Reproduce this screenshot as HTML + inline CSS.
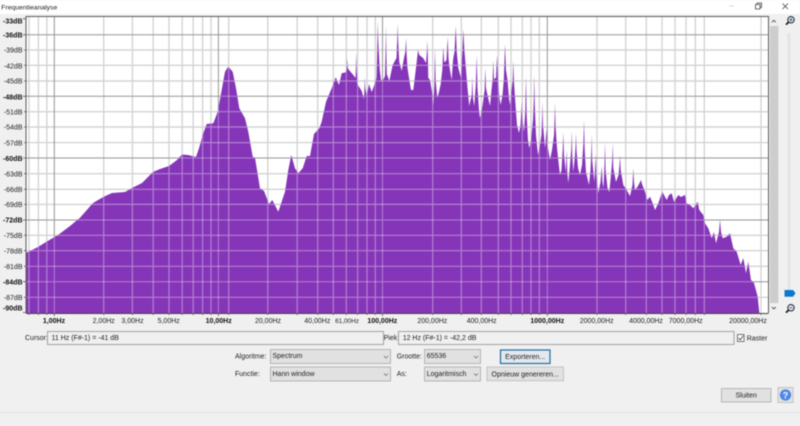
<!DOCTYPE html>
<html>
<head>
<meta charset="utf-8">
<title>Frequentieanalyse</title>
<style>
html,body{margin:0;padding:0;width:800px;height:426px;overflow:hidden;background:#f0f0f0}
svg{display:block;filter:blur(.4px)}
text{font-family:"Liberation Sans",sans-serif;font-size:7px;fill:#222}
.b{font-weight:bold;fill:#111}
.d text{text-anchor:end}
.x text{text-anchor:middle}
.c{text-anchor:middle}
</style>
</head>
<body>
<svg width="800" height="426" viewBox="0 0 800 426" xmlns="http://www.w3.org/2000/svg">
<defs>
<path id="minor" d="M29 17V313M38.4 17V313M46.8 17V313M103.7 17V313M132.4 17V313M153.2 17V313M169 17V313M182.2 17V313M193.2 17V313M202.6 17V313M211 17V313M228.7 17V313M267.8 17V313M297.2 17V313M317.7 17V313M333.3 17V313M346.3 17V313M357.6 17V313M367 17V313M375.3 17V313M432.7 17V313M461.3 17V313M481.3 17V313M498.3 17V313M511 17V313M522.3 17V313M531 17V313M539.3 17V313M597 17V313M625.7 17V313M646.3 17V313M662 17V313M675 17V313M686 17V313M695.3 17V313M704.3 17V313M761 17V313M26 50H768.5M26 65.3H768.5M26 81H768.5M26 111.7H768.5M26 127H768.5M26 142.6H768.5M26 173.7H768.5M26 189.3H768.5M26 204.4H768.5M26 235.3H768.5M26 250.7H768.5M26 266.3H768.5M26 297.3H768.5"/>
<path id="major" d="M54.3 17V313M218.4 17V313M382.5 17V313M547.3 17V313M26 34.7H768.5M26 96.3H768.5M26 158H768.5M26 220H768.5M26 281.7H768.5"/>
<clipPath id="sp"><polygon points="26,313 26,253 38,247 46,242 58,235 70,226 80,217.7 93,203 103.7,196.7 112,193 125,192 132,188 142,183 153,172 160,169 169,166 177,160 182,154.5 188,155 196,157 199.3,147.3 202.7,135 206.7,124 213.3,123.3 217.7,111.7 221.7,90 225,71.7 228.3,66.7 232.7,71.7 236,88.3 239.3,108.3 245,118.3 248.3,131.7 252.7,156.7 255,157.7 260,188.3 264,191 269,204 272.3,200 278.3,211.7 285,191.7 288.3,170 291.3,155 295,168.3 298.3,173.3 302.7,168.3 306.7,156 310,156 314,134 319.3,128.3 321.7,121.7 326,101.7 331.7,88.3 335.7,77.3 339,85 341.7,73.3 346,72.3 346.9,68 347.3,58.3 347.8,68 349,70 353.3,75 355.5,78 356,65 356.3,52.3 356.7,70 357.3,84 361.7,91 364,99 364.5,85 364.7,77 365.2,88 366.7,96 369,84 371.7,92 374.3,85 376.5,78 377.2,50 377.7,21 378.2,40 379,55 379.8,70 381,80 382.7,81 385,76 385.6,50 386,25 386.4,55 386.8,74 389.3,81 392.7,65 396.5,58 397.2,40 397.7,24 398.2,42 399.3,62 401.7,71 404,58 405.3,52 406,38 406.7,55 407.5,68 409,78 411,90 413.3,90 415.5,72 416.7,62 418,50 419.3,55 423.3,58.3 426,63 427,50 427.3,40 427.8,55 428.3,78 430,80 432,92 433.3,106 434.3,85 435,48 435.6,80 437.3,98 439,92 440.7,84 442.3,70 443.3,47 444.2,62 445,62 446.5,60 447.7,37 448.5,58 449.3,66 451.7,80 452.6,66 453.3,58 454.5,52 455.7,26 456.8,52 458.3,68 461,78 462.2,55 463.3,29 464.4,50 466,70 467.5,88 469.3,106 470.5,100 471.7,96 472.3,77 473,98 474.3,106 475.8,85 476.7,55 477.5,88 479,110 480,118 481.5,112 483.3,100 484.6,90 485.3,68 486,88 487.3,94 490,106 491.5,90 492.6,80 493.3,60 494,80 495,78 496,78 497,55 498,80 499.5,98 500.7,105 502.5,95 503.8,80 505,44 506,70 507.5,80 509,98 510,105 511.5,90 512.7,80 513.3,61 514,82 515.5,105 517,125 519,133 520.5,125 521.3,110 521.7,101 522.2,115 524,132 525.3,110 526,76 526.7,115 528,140 529.3,148 531,140 533,120 533.8,100 534.3,75 534.8,105 536,135 538,155 539,150 540,145 541.5,135 542.2,115 542.5,101 543,125 545,148 546.7,128 547.5,145 550,160 552,150 554,135 554.6,118 555,103 555.5,125 557,148 558.3,160 560,175 561.5,170 562.7,150 563.3,132 564,155 565.7,172 566.7,150 567.3,172 568.3,183 570,165 571.2,150 571.7,131 572.3,155 573.3,172 575,155 575.6,145 576,133 576.5,150 578,168 580,175 582,165 583.3,145 584,120 584.7,150 586,172 589,185 590.5,170 591.3,152 591.7,134 592.2,160 594.3,182 595.2,165 595.7,154 596.3,175 598.3,193 600.5,182 601.7,166 602.5,182 603.5,188 604.5,165 605,141.7 605.6,170 607.5,188 609.3,192 611,175 612.2,160 612.7,143 613.3,168 616,182 618.5,175 619.5,165 620,155 620.7,170 623.3,185 626.7,190 630,196 632.5,185 633.3,168 634,182 635,190 638,186 641,180 642,184 645,191.7 647.3,200 650,196.7 653,204 655,210 658.3,203.3 662.3,191.7 664,195 666.7,200 669,195 671.7,193.3 674,201.7 678.3,195 681,197 685,195 686.7,203.3 690,205 693.3,208.3 697.7,201.7 699.3,210 703.3,215 705,223.3 708.3,228.3 711.7,238.3 714,232 716,243.3 719,232 720,219.3 721,232 722.7,238.3 726.7,236.7 730,233.3 733.3,248.3 736.7,251.7 740.7,265 743.3,258 746,273 748.3,261.7 751,280 754,283 757.7,296.7 759.3,312.5 759.3,313"/></clipPath>
</defs>

<!-- window chrome -->
<rect width="800" height="426" fill="#f0f0f0"/>
<rect width="800" height="14" fill="#fff"/>
<text x="1.3" y="9.3" style="font-size:6.8px">Frequentieanalyse</text>
<path d="M729 6H734" stroke="#d8d8d8" stroke-width="1"/>
<path d="M755.5 4.5h4.5v4.5h-4.5zM757 4.5v-1.5h4.5v4.5h-1.5" fill="none" stroke="#444" stroke-width=".8"/>
<path d="M782.5 3.5L788 9M788 3.5L782.5 9" fill="none" stroke="#444" stroke-width=".8"/>

<!-- plot -->
<rect x="26" y="17" width="742.5" height="296" fill="#fff"/>
<use href="#minor" fill="none" stroke="#d4d4d4" stroke-width="1.4"/>
<use href="#major" fill="none" stroke="#969696" stroke-width="1"/>
<rect x="26" y="17" width="742.5" height="296" fill="#8535b8" clip-path="url(#sp)"/>
<g clip-path="url(#sp)">
<use href="#minor" fill="none" stroke="#fff" stroke-opacity=".38" stroke-width="1.2"/>
<use href="#major" fill="none" stroke="#fff" stroke-opacity=".38" stroke-width="1"/>
</g>
<path d="M26 313V16.5H768.5V313" fill="none" stroke="#5a5a5a" stroke-width="1"/>
<path d="M26 313.5H768.5" stroke="#444" stroke-width="1"/>
<path d="M23 18.7H26M23 34.7H26M24 50H26M24 65.3H26M24 81H26M23 96.3H26M24 111.7H26M24 127H26M24 142.6H26M23 158H26M24 173.7H26M24 189.3H26M24 204.4H26M23 220H26M24 235.3H26M24 250.7H26M24 266.3H26M23 281.7H26M24 297.3H26M23 312.5H26" stroke="#555" stroke-width=".8"/>
<path d="M29 313V315M38.4 313V315M46.8 313V315M54.3 313V316M103.7 313V315M132.4 313V315M153.2 313V315M169 313V315M182.2 313V315M193.2 313V315M202.6 313V315M211 313V315M218.4 313V316M228.7 313V315M267.8 313V315M297.2 313V315M317.7 313V315M333.3 313V315M346.3 313V315M357.6 313V315M367 313V315M375.3 313V315M382.5 313V316M432.7 313V315M461.3 313V315M481.3 313V315M498.3 313V315M511 313V315M522.3 313V315M531 313V315M539.3 313V315M547.3 313V316M597 313V315M625.7 313V315M646.3 313V315M662 313V315M675 313V315M686 313V315M695.3 313V315M704.3 313V315M761 313V315" stroke="#555" stroke-width=".8"/>

<g class="d">
<text x="22.5" y="23.5" class="b">-33dB</text>
<text x="22.5" y="37.5" class="b">-36dB</text>
<text x="22.5" y="52.5">-39dB</text>
<text x="22.5" y="68.5">-42dB</text>
<text x="22.5" y="83.5">-45dB</text>
<text x="22.5" y="99.5" class="b">-48dB</text>
<text x="22.5" y="114.5">-51dB</text>
<text x="22.5" y="129.5">-54dB</text>
<text x="22.5" y="145.5">-57dB</text>
<text x="22.5" y="161" class="b">-60dB</text>
<text x="22.5" y="176.5">-63dB</text>
<text x="22.5" y="192">-66dB</text>
<text x="22.5" y="207">-69dB</text>
<text x="22.5" y="222.5" class="b">-72dB</text>
<text x="22.5" y="238">-75dB</text>
<text x="22.5" y="253.5">-78dB</text>
<text x="22.5" y="269">-81dB</text>
<text x="22.5" y="284.5" class="b">-84dB</text>
<text x="22.5" y="300">-87dB</text>
<text x="22.5" y="310.7" class="b">-90dB</text>
</g>
<g class="x">
<text x="54" y="323" class="b">1,00Hz</text>
<text x="103.7" y="323">2,00Hz</text>
<text x="132.5" y="323">3,00Hz</text>
<text x="168.7" y="323">5,00Hz</text>
<text x="218.7" y="323" class="b">10,00Hz</text>
<text x="268" y="323">20,00Hz</text>
<text x="317.3" y="323">40,00Hz</text>
<text x="347" y="323" style="font-size:6.4px">61,00Hz</text>
<text x="382.3" y="323" class="b">100,00Hz</text>
<text x="432.3" y="323">200,00Hz</text>
<text x="481.7" y="323">400,00Hz</text>
<text x="547.3" y="323" class="b">1000,00Hz</text>
<text x="596.7" y="323">2000,00Hz</text>
<text x="646" y="323">4000,00Hz</text>
<text x="685.7" y="323">7000,00Hz</text>
<text x="748" y="323">20000,00Hz</text>
</g>

<!-- scrollbar + slider -->
<rect x="770" y="26" width="8.3" height="277" fill="#cdcdcd"/>
<path d="M771.8 22.3L773.8 20.3L775.8 22.3M771.8 307L773.8 309L775.8 307" fill="none" stroke="#555" stroke-width=".9"/>
<rect x="787.5" y="33" width="3" height="257" fill="#e4e4e4"/>
<path d="M784.5 290H793L795.5 293.3L793 296.7H784.5Z" fill="#0a78d0"/>
<circle cx="791" cy="19.7" r="3.2" fill="#dfe7f5" stroke="#222" stroke-width="1"/>
<path d="M788.7 22L786 24.7" stroke="#111" stroke-width="1.6"/>
<path d="M789.4 19.7H792.6M791 18.1V21.3" stroke="#2a4f9a" stroke-width=".8"/>
<circle cx="791" cy="307.7" r="3.2" fill="#dfe7f5" stroke="#222" stroke-width="1"/>
<path d="M788.7 310L786 312.7" stroke="#111" stroke-width="1.6"/>
<path d="M789.4 307.7H792.6" stroke="#2a4f9a" stroke-width=".8"/>

<!-- cursor / peak row -->
<text x="25" y="339.8">Cursor:</text>
<rect x="47.5" y="331.5" width="336" height="13" fill="#f0f0f0" stroke="#a3a3a3"/>
<text x="51.5" y="339.8">11 Hz (F#-1) = -41 dB</text>
<text x="383.7" y="339.8">Piek:</text>
<rect x="398.5" y="331.5" width="335.5" height="13" fill="#f0f0f0" stroke="#a3a3a3"/>
<text x="402.7" y="339.8">12 Hz (F#-1) = -42,2 dB</text>
<rect x="737.5" y="334.5" width="6.5" height="7" fill="#fff" stroke="#555" stroke-width=".8"/>
<path d="M738.7 338L740.3 340L743 335.8" fill="none" stroke="#333" stroke-width=".8"/>
<text x="746.7" y="340.3">Raster</text>

<!-- controls -->
<text x="235" y="358.5">Algoritme:</text>
<text x="235" y="376">Functie:</text>
<rect x="270.5" y="349.5" width="120" height="14" fill="#e1e1e1" stroke="#b4b4b4"/>
<text x="272.5" y="358">Spectrum</text>
<path d="M384 356L386 358L388 356" fill="none" stroke="#666" stroke-width=".7"/>
<rect x="270.5" y="367" width="120" height="14" fill="#e1e1e1" stroke="#b4b4b4"/>
<text x="272.5" y="375.8">Hann window</text>
<path d="M384 373.5L386 375.5L388 373.5" fill="none" stroke="#666" stroke-width=".7"/>

<text x="396.7" y="358.5">Grootte:</text>
<text x="396.7" y="376">As:</text>
<rect x="424.5" y="349.5" width="56" height="14" fill="#e1e1e1" stroke="#b4b4b4"/>
<text x="426.7" y="358">65536</text>
<path d="M474 356L476 358L478 356" fill="none" stroke="#666" stroke-width=".7"/>
<rect x="424.5" y="367" width="56" height="14" fill="#e1e1e1" stroke="#b4b4b4"/>
<text x="426.7" y="375.8">Logaritmisch</text>
<path d="M474 373.5L476 375.5L478 373.5" fill="none" stroke="#666" stroke-width=".7"/>

<rect x="500.5" y="350" width="49.5" height="13.5" fill="#e3e8ee" stroke="#1e6f9f" stroke-width="1.2"/>
<text x="525.2" y="358.8" class="c">Exporteren...</text>
<rect x="487" y="367" width="76.5" height="13.7" fill="#e1e1e1" stroke="#c4c4c4"/>
<text x="525.2" y="376.3" class="c">Opnieuw genereren...</text>
<rect x="721.5" y="388.5" width="49.5" height="13.5" fill="#e1e1e1" stroke="#b8b8b8"/>
<text x="746.2" y="397.5" class="c">Sluiten</text>
<rect x="778" y="387.5" width="15" height="15" fill="#e1e1e1" stroke="#c4c4c4"/>
<circle cx="785.5" cy="395" r="5.6" fill="#4f87e6"/>
<text x="785.5" y="398.3" class="c" style="font-size:9px;font-weight:bold;fill:#fff">?</text>

<!-- status line -->
<path d="M0 412.7H800" stroke="#e2e2e2" stroke-width="1"/>
</svg>
</body>
</html>
